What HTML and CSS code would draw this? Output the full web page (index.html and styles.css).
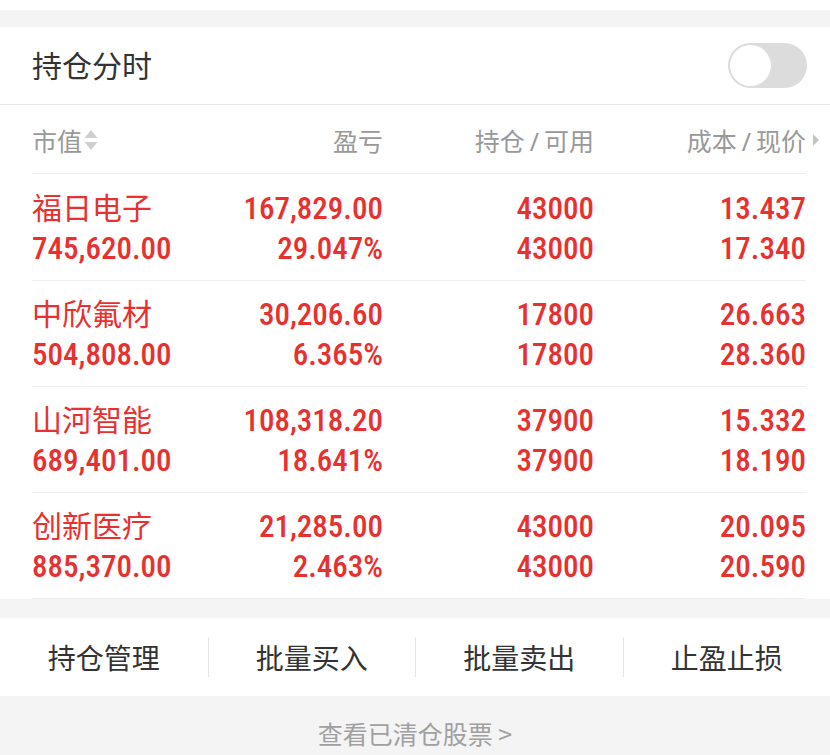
FILE: index.html
```html
<!DOCTYPE html>
<html lang="zh">
<head>
<meta charset="utf-8">
<link rel="stylesheet" href="styles.css">
</head>
<body>
<div class="page">
  <div class="top-white"></div>
  <div class="gap"></div>
  <section class="card">
    <div class="title-bar">
      <span class="title">持仓分时</span>
      <span class="toggle"><span class="knob"></span></span>
    </div>
    <div class="table">
      <div class="thead">
        <span class="th th-left">市值<svg class="sort" width="16" height="24" viewBox="0 0 16 24"><path d="M8 2 L14.5 10 L1.5 10 Z" fill="#cfcfcf"/><path d="M8 22 L14.5 14 L1.5 14 Z" fill="#cfcfcf"/></svg></span>
        <span class="th">盈亏</span>
        <span class="th">持仓<span class="slash">/</span>可用</span>
        <span class="th th-last">成本<span class="slash">/</span>现价<svg class="more" width="8" height="14" viewBox="0 0 8 14"><path d="M1 1 L7 7 L1 13 Z" fill="#c4c4c4"/></svg></span>
      </div>
      <div class="row first">
        <span class="name">福日电子</span><span class="num">167,829.00</span><span class="num">43000</span><span class="num">13.437</span>
        <span class="num left">745,620.00</span><span class="num">29.047%</span><span class="num">43000</span><span class="num">17.340</span>
      </div>
      <div class="row">
        <span class="name">中欣氟材</span><span class="num">30,206.60</span><span class="num">17800</span><span class="num">26.663</span>
        <span class="num left">504,808.00</span><span class="num">6.365%</span><span class="num">17800</span><span class="num">28.360</span>
      </div>
      <div class="row">
        <span class="name">山河智能</span><span class="num">108,318.20</span><span class="num">37900</span><span class="num">15.332</span>
        <span class="num left">689,401.00</span><span class="num">18.641%</span><span class="num">37900</span><span class="num">18.190</span>
      </div>
      <div class="row">
        <span class="name">创新医疗</span><span class="num">21,285.00</span><span class="num">43000</span><span class="num">20.095</span>
        <span class="num left">885,370.00</span><span class="num">2.463%</span><span class="num">43000</span><span class="num">20.590</span>
      </div>
    </div>
  </section>
  <div class="gap2"></div>
  <nav class="actions">
    <span class="action">持仓管理</span>
    <span class="action">批量买入</span>
    <span class="action">批量卖出</span>
    <span class="action">止盈止损</span>
  </nav>
  <div class="footer">查看已清仓股票 &gt;</div>
</div>
</body>
</html>
```

FILE: styles.css
```css
* { box-sizing: border-box; }
html, body { margin: 0; padding: 0; background: #f4f4f4; }
body {
  font-family: Roboto, "Noto Sans CJK SC", sans-serif;
  width: 830px;
  height: 755px;
  overflow: hidden;
}
.page { display: flex; flex-direction: column; }
.top-white { height: 10px; background: #fff; }
.gap { height: 17px; background: #f4f4f4; }
.card { background: #fff; }
.title-bar {
  height: 78px;
  display: flex;
  align-items: center;
  justify-content: space-between;
  padding: 0 23px 0 32px;
  border-bottom: 1px solid #e8e8e8;
}
.title {
  font-family: "Noto Sans CJK SC", sans-serif;
  font-size: 30px;
  color: #333;
  margin-bottom: 4px;
}
.toggle {
  width: 79px;
  height: 45px;
  border-radius: 23px;
  background: #dcdcdc;
  padding: 2px;
  display: flex;
  align-items: center;
}
.knob {
  width: 41px;
  height: 41px;
  border-radius: 50%;
  background: #fff;
}
.table { padding: 0 24px 0 32px; }
.thead, .row {
  display: grid;
  grid-template-columns: 139px 212px 211px 212px;
}
.thead {
  height: 69px;
  align-items: center;
  border-bottom: 1px solid #efefef;
  padding-top: 1px;
}
.th {
  font-family: "Noto Sans CJK SC", sans-serif;
  font-size: 25px;
  color: #999;
  text-align: right;
  white-space: nowrap;
}
.th-left { text-align: left; display: flex; align-items: center; }
.th-last { position: relative; }
.slash { margin: 0 5px; font-family: "Noto Sans", sans-serif; }
.sort { margin-left: 1px; }
.more { position: absolute; right: -14px; top: 50%; transform: translateY(-50%); }
.row {
  padding: 14px 0 11px;
  border-bottom: 1px solid #efefef;
  line-height: 40px;
  color: #e8312f;
}
.row.first { padding-top: 15px; }
.name {
  font-family: "Noto Sans CJK SC", sans-serif;
  font-size: 30px;
  white-space: nowrap;
  margin-top: -3px;
}
.num {
  font-family: Roboto, sans-serif;
  font-size: 31px;
  font-weight: 500;
  font-stretch: 75%;
  text-align: right;
  white-space: nowrap;
}
.num.left { text-align: left; }
.gap2 { height: 19px; background: #f4f4f4; }
.actions {
  height: 78px;
  background: #fff;
  display: grid;
  grid-template-columns: repeat(4, 1fr);
  align-items: center;
}
.action {
  font-family: "Noto Sans CJK SC", sans-serif;
  font-size: 28px;
  color: #333;
  text-align: center;
  border-left: 1px solid #e6e6e6;
  line-height: 40px;
}
.action:first-child { border-left: none; }
.footer {
  height: 59px;
  display: flex;
  align-items: center;
  justify-content: center;
  padding-top: 14px;
  font-family: "Noto Sans CJK SC", sans-serif;
  font-size: 25px;
  color: #a0a0a0;
}
```
